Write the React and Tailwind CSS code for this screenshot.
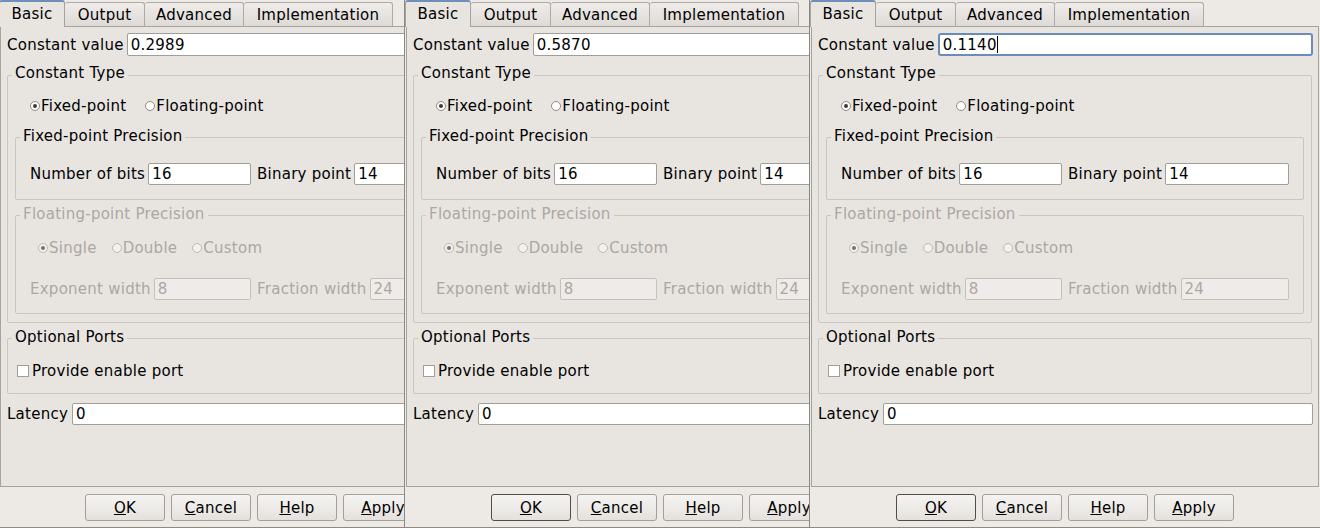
const FONT = "font-['DejaVu_Sans',sans-serif]";

function Field({ value, focused, disabled, className = "" }) {
  let look = "border border-[#a19e9a] bg-white rounded-[2px]";
  if (focused) look = "border-2 border-[#6a8cb6] bg-white rounded-[3px]";
  if (disabled) look = "border border-[#c4c0bc] bg-[#eeebe8] text-[#aba7a3] rounded-[2px]";
  return (
    <div className={`flex items-center pl-[3px] overflow-hidden whitespace-nowrap ${look} ${className}`}>
      <span>{value}</span>
      {focused && <span className="w-[1px] h-[17px] bg-black" />}
    </div>
  );
}

function Radio({ checked, disabled, label }) {
  return (
    <span className="flex items-center whitespace-nowrap">
      <span
        className={`w-[10px] h-[10px] rounded-full border flex items-center justify-center ${
          disabled ? "border-[#bdb9b5] bg-[#f3f1ef]" : "border-[#8e8b87] bg-white"
        }`}
      >
        {checked && (
          <span className={`w-[4px] h-[4px] rounded-full ${disabled ? "bg-[#77746f]" : "bg-[#3a3a3a]"}`} />
        )}
      </span>
      <span className={`ml-[1px] ${disabled ? "text-[#aba7a3]" : ""}`}>{label}</span>
    </span>
  );
}

function Group({ title, disabled, className = "", titleClass = "", children }) {
  return (
    <div className={`flex flex-col border border-[#c9c5c1] rounded-[2px] ${className}`}>
      <span
        className={`self-start ml-[4px] px-[3px] h-[18px] whitespace-nowrap bg-[#e8e5e1] ${titleClass} ${
          disabled ? "text-[#aba7a3]" : ""
        }`}
      >
        {title}
      </span>
      {children}
    </div>
  );
}

function LabeledField({ label, value, disabled }) {
  return (
    <div className="flex items-center gap-[3px] h-[22px] min-w-0">
      <span className={`whitespace-nowrap ${disabled ? "text-[#aba7a3]" : ""}`}>{label}</span>
      <Field value={value} disabled={disabled} className="flex-1 min-w-0 h-[22px]" />
    </div>
  );
}

function Button({ mnemonic, rest, isDefault }) {
  return (
    <div
      className={`w-[80px] h-[27px] flex items-center justify-center rounded-[3px] border bg-gradient-to-b from-[#f6f4f2] to-[#e4e1dd] ${
        isDefault ? "border-[#4f4c49]" : "border-[#a29f9b]"
      }`}
    >
      <span>
        <span className="underline">{mnemonic}</span>
        {rest}
      </span>
    </div>
  );
}

const tabs = [
  { name: "Output", w: "w-[80px]" },
  { name: "Advanced", w: "w-[99px]" },
  { name: "Implementation", w: "w-[149px]" },
];

function Dialog({ value, focused, okDefault }) {
  return (
    <div className="w-[511px] h-[528px] shrink-0 flex flex-col border-l border-b border-[#8c8985] bg-[#edeae6]">
      <div className="h-[26px] flex items-end">
        <div className="relative z-10 w-[66px] h-[27px] -mb-[1px] flex items-center justify-center pb-[2px] bg-[#e8e5e1] border-x border-[#a6a29e] border-t-2 border-t-[#6d8fba] rounded-t-[3px]">
          Basic
        </div>
        {tabs.map((t) => (
          <div
            key={t.name}
            className={`${t.w} h-[24px] flex items-center justify-center border-r border-t border-[#aeaba7] rounded-t-[3px] bg-gradient-to-b from-[#efece9] to-[#dedad6]`}
          >
            {t.name}
          </div>
        ))}
      </div>

      <div className="mx-[1px] h-[461px] flex flex-col border border-[#a6a29e] bg-[#e8e5e1]">
        <div className="mt-[6px] ml-[6px] mr-[5px] h-[23px] flex items-center gap-[3px]">
          <span className="whitespace-nowrap">Constant value</span>
          <Field value={value} focused={focused} className="flex-1 h-[23px]" />
        </div>

        <Group title="Constant Type" className="mt-[19px] mx-[6px] h-[248px]" titleClass="-mt-[12px]">
          <div className="mt-[15px] ml-[22px] h-[18px] flex items-center gap-[19px]">
            <Radio checked label="Fixed-point" />
            <Radio label="Floating-point" />
          </div>

          <Group title="Fixed-point Precision" className="mt-[22px] mx-[7px] h-[63px]" titleClass="-mt-[11px]">
            <div className="mt-[18px] px-[14px] grid grid-cols-2 gap-x-[6px]">
              <LabeledField label="Number of bits" value="16" />
              <LabeledField label="Binary point" value="14" />
            </div>
          </Group>

          <Group
            title="Floating-point Precision"
            disabled
            className="mt-[15px] mx-[7px] h-[99px]"
            titleClass="-mt-[11px]"
          >
            <div className="mt-[16px] ml-[22px] h-[18px] flex items-center gap-[15px]">
              <Radio checked disabled label="Single" />
              <Radio disabled label="Double" />
              <Radio disabled label="Custom" />
            </div>
            <div className="mt-[21px] px-[14px] grid grid-cols-2 gap-x-[6px]">
              <LabeledField disabled label="Exponent width" value="8" />
              <LabeledField disabled label="Fraction width" value="24" />
            </div>
          </Group>
        </Group>

        <Group title="Optional Ports" className="mt-[15px] mx-[6px] h-[56px]" titleClass="-mt-[11px]">
          <div className="mt-[16px] ml-[9px] h-[18px] flex items-center gap-[3px]">
            <span className="w-[12px] h-[12px] border border-[#a19e9a] bg-white" />
            <span>Provide enable port</span>
          </div>
        </Group>

        <div className="mt-[9px] ml-[6px] mr-[5px] h-[22px] flex items-center gap-[4px]">
          <span>Latency</span>
          <Field value="0" className="flex-1 h-[22px]" />
        </div>
      </div>

      <div className="pt-[7px] flex justify-center gap-[6px]">
        <Button mnemonic="O" rest="K" isDefault={okDefault} />
        <Button mnemonic="C" rest="ancel" />
        <Button mnemonic="H" rest="elp" />
        <Button mnemonic="A" rest="pply" />
      </div>
    </div>
  );
}

export default function App() {
  return (
    <div
      className={`w-[1320px] h-[528px] flex overflow-hidden bg-[#edeae6] text-[15px] leading-[18px] tracking-[0.25px] text-black ${FONT}`}
    >
      <div className="w-[406px] -ml-[2px] shrink-0 overflow-hidden">
        <Dialog value="0.2989" />
      </div>
      <div className="w-[405px] shrink-0 overflow-hidden">
        <Dialog value="0.5870" okDefault />
      </div>
      <Dialog value="0.1140" focused okDefault />
    </div>
  );
}
